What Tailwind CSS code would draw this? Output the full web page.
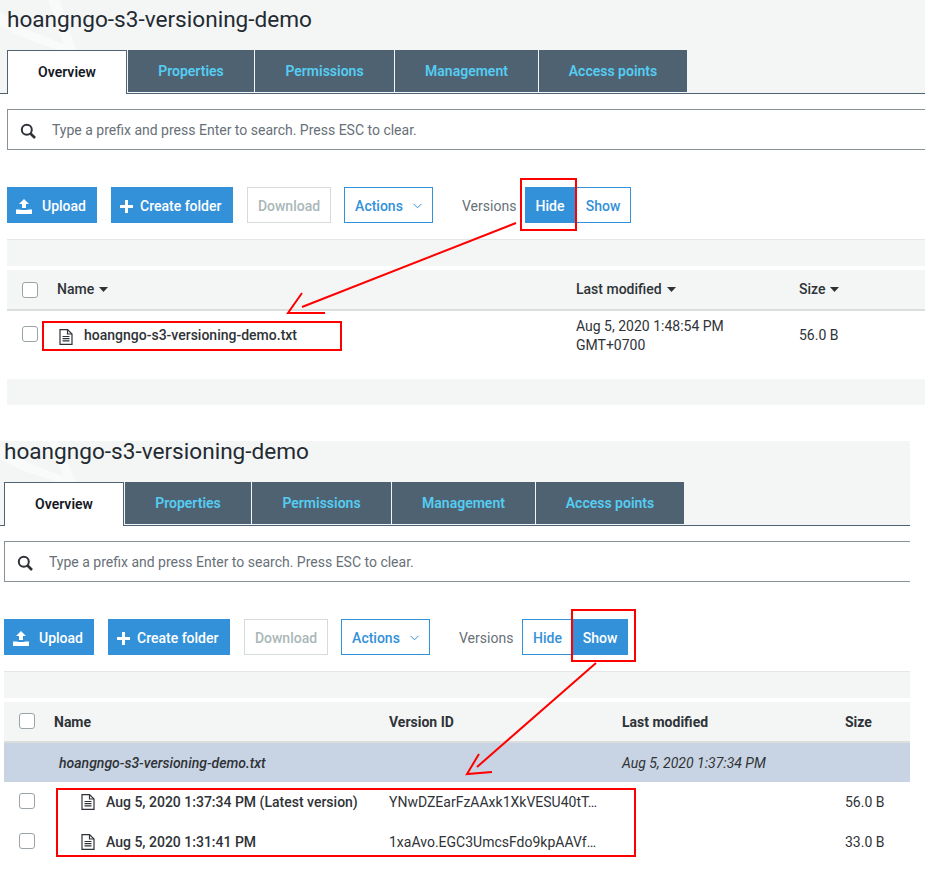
<!DOCTYPE html>
<html lang="en">

<head>
    <meta charset="UTF-8">
    <meta name="viewport" content="width=device-width, initial-scale=1.0">
    <title>S3 versioning demo</title>
    <script src="https://cdn.jsdelivr.net/npm/@tailwindcss/browser@4"></script>
</head>

<body class="bg-white">
    <div class="relative w-[925px] h-[894px] overflow-hidden font-['Roboto',sans-serif] text-[14px] text-[#16191f]">

        <!-- Versions hidden -->
        <section class="w-[925px]">
            <div class="relative bg-[#f4f6f6]">
                <svg class="absolute left-0 top-0" width="90" height="94" viewBox="0 0 90 94">
                    <path d="M0 12 L28 30 L78 50 L58 50 L24 38 L0 26 Z" fill="#f9fafa" />
                    <path d="M48 0 L60 0 L76 50 L66 50 Z" fill="#f9fafa" />
                </svg>
                <h1 class="relative h-[50px] pt-[9px] pl-[7px] text-[22.6px] leading-[22px] font-normal text-[#232a31]">hoangngo-s3-versioning-demo</h1>
                <div class="relative flex h-[44px] pl-[7px] gap-px border-b border-[#4f6272] font-semibold text-[#55cdf2]">
                    <div class="w-[120px] h-[44px] flex items-center justify-center bg-white border-x border-t border-[#4f6272] text-[#16191f]">Overview</div>
                    <div class="w-[126px] h-[42px] flex items-center justify-center bg-[#4f6272]">Properties</div>
                    <div class="w-[139px] h-[42px] flex items-center justify-center bg-[#4f6272]">Permissions</div>
                    <div class="w-[143px] h-[42px] flex items-center justify-center bg-[#4f6272]">Management</div>
                    <div class="w-[148px] h-[42px] flex items-center justify-center bg-[#4f6272]">Access points</div>
                </div>
            </div>

            <div class="pl-[7px]">
                <div class="mt-[15px] h-[41px] flex items-center border-y border-l border-[#879196] text-[#687078]">
                    <svg class="ml-[12px] mr-[16px] mt-[2px]" width="16" height="16" viewBox="0 0 16 16" fill="none" stroke="#2f3337" stroke-width="2">
                        <circle cx="6.8" cy="6.8" r="5" />
                        <path d="M10.5 10.5 L15 15" stroke-width="2.6" />
                    </svg>
                    <span class="pt-[2px]">Type a prefix and press Enter to search. Press ESC to clear.</span>
                </div>

                <div class="mt-[37px] flex items-center h-[36px] font-medium">
                    <button class="w-[90px] h-[36px] pt-[2px] pl-[9px] flex items-center gap-[10px] bg-[#3391da] text-white">
                        <svg width="16" height="15" viewBox="0 0 16 15" fill="white">
                            <path d="M8 0 L13 5 L10 5 L10 9 L6 9 L6 5 L3 5 Z" />
                            <path d="M0 10.500 H4.500 V11 H11.500 V10.500 H16 V15 H0 Z" />
                        </svg>
                        Upload
                    </button>
                    <button class="ml-[14px] w-[122px] h-[36px] pt-[2px] pl-[9px] flex items-center gap-[7px] bg-[#3391da] text-white">
                        <svg width="13" height="13" viewBox="0 0 13 13" fill="white">
                            <path d="M5 0 H8 V5 H13 V8 H8 V13 H5 V8 H0 V5 H5 Z" />
                        </svg>
                        Create folder
                    </button>
                    <button class="ml-[14px] w-[84px] h-[36px] pt-[2px] border border-[#d5dbdb] text-[#aab7b8]">Download</button>
                    <button class="ml-[13px] w-[89px] h-[36px] pt-[2px] flex items-center justify-center gap-[10px] border border-[#3391da] text-[#3391da]">
                        Actions
                        <svg width="9" height="6" viewBox="0 0 9 6" fill="none" stroke="#3391da" stroke-width="1">
                            <path d="M0.500 0.800 L4.500 4.800 L8.500 0.800" />
                        </svg>
                    </button>
                    <span class="ml-[29px] w-[63px] pt-[2px] font-normal text-[#687078]">Versions</span>
                    <button class="w-[50px] h-[36px] pt-[2px] bg-[#3391da] text-white">Hide</button>
                    <button class="w-[56px] h-[36px] pt-[2px] pl-px border border-l-0 border-[#3391da] text-[#3391da]">Show</button>
                </div>

                <div class="mt-[16px] h-[27px] bg-[#f4f6f6] border-t border-[#e4e7e7]"></div>

                <div class="mt-[4px] h-[41px] grid grid-cols-[50px_519px_223px_1fr] items-center bg-[#f4f6f6] border-b-2 border-[#dcdede] font-medium text-[#2f3337]">
                    <span class="ml-[15px] w-[16px] h-[16px] rounded-[3px] border border-[#9aa3a8] bg-white"></span>
                    <span class="flex items-center gap-[5px]">Name
                        <svg width="9" height="5" viewBox="0 0 9 5" fill="#2f3337"><path d="M0 0 H9 L4.500 5 Z" /></svg>
                    </span>
                    <span class="flex items-center gap-[5px]">Last modified
                        <svg width="9" height="5" viewBox="0 0 9 5" fill="#2f3337"><path d="M0 0 H9 L4.500 5 Z" /></svg>
                    </span>
                    <span class="flex items-center gap-[5px]">Size
                        <svg width="9" height="5" viewBox="0 0 9 5" fill="#2f3337"><path d="M0 0 H9 L4.500 5 Z" /></svg>
                    </span>
                </div>

                <div class="h-[68px] grid grid-cols-[50px_519px_223px_1fr] items-start text-[#2f3337] leading-[19px]">
                    <span class="ml-[15px] mt-[15px] w-[16px] h-[16px] rounded-[3px] border border-[#9aa3a8] bg-white"></span>
                    <span class="mt-[15px] ml-[2px] flex items-center gap-[11px] font-medium">
                        <svg class="mt-[2px]" width="14" height="16" viewBox="0 0 14 16" fill="none" stroke="#2f3337" stroke-width="1.2">
                            <path d="M1 0.600 H8.500 L13 5 V15.400 H1 Z" />
                            <path d="M8.500 0.600 V5 H13" />
                            <path d="M3.500 7.500 H10.500 M3.500 9.700 H10.500 M3.500 11.900 H10.500" />
                        </svg>
                        hoangngo-s3-versioning-demo.txt
                    </span>
                    <span class="mt-[6px]">Aug 5, 2020 1:48:54 PM<br>GMT+0700</span>
                    <span class="mt-[15px]">56.0 B</span>
                </div>

                <div class="h-[26px] bg-[#f4f6f6]"></div>
            </div>
        </section>

        <!-- Versions shown -->
        <section class="w-[910px] mt-[36px]">
            <div class="relative bg-[#f4f6f6]">
                <svg class="absolute left-0 top-0" width="90" height="85" viewBox="0 0 90 85">
                    <path d="M0 4 L28 22 L78 41 L58 41 L24 30 L0 18 Z" fill="#f9fafa" />
                    <path d="M48 0 L58 0 L76 41 L66 41 Z" fill="#f9fafa" />
                </svg>
                <h1 class="relative h-[41px] pl-[4px] text-[22.6px] leading-[22px] font-normal text-[#232a31]">hoangngo-s3-versioning-demo</h1>
                <div class="relative flex h-[44px] pl-[4px] gap-px border-b border-[#4f6272] font-semibold text-[#55cdf2]">
                    <div class="w-[120px] h-[44px] flex items-center justify-center bg-white border-x border-t border-[#4f6272] text-[#16191f]">Overview</div>
                    <div class="w-[126px] h-[42px] flex items-center justify-center bg-[#4f6272]">Properties</div>
                    <div class="w-[139px] h-[42px] flex items-center justify-center bg-[#4f6272]">Permissions</div>
                    <div class="w-[143px] h-[42px] flex items-center justify-center bg-[#4f6272]">Management</div>
                    <div class="w-[148px] h-[42px] flex items-center justify-center bg-[#4f6272]">Access points</div>
                </div>
            </div>

            <div class="pl-[4px]">
                <div class="mt-[15px] h-[41px] flex items-center border-y border-l border-[#879196] text-[#687078]">
                    <svg class="ml-[12px] mr-[16px] mt-[2px]" width="16" height="16" viewBox="0 0 16 16" fill="none" stroke="#2f3337" stroke-width="2">
                        <circle cx="6.8" cy="6.8" r="5" />
                        <path d="M10.5 10.5 L15 15" stroke-width="2.6" />
                    </svg>
                    <span class="pt-[2px]">Type a prefix and press Enter to search. Press ESC to clear.</span>
                </div>

                <div class="mt-[37px] flex items-center h-[36px] font-medium">
                    <button class="w-[90px] h-[36px] pt-[2px] pl-[9px] flex items-center gap-[10px] bg-[#3391da] text-white">
                        <svg width="16" height="15" viewBox="0 0 16 15" fill="white">
                            <path d="M8 0 L13 5 L10 5 L10 9 L6 9 L6 5 L3 5 Z" />
                            <path d="M0 10.500 H4.500 V11 H11.500 V10.500 H16 V15 H0 Z" />
                        </svg>
                        Upload
                    </button>
                    <button class="ml-[14px] w-[122px] h-[36px] pt-[2px] pl-[9px] flex items-center gap-[7px] bg-[#3391da] text-white">
                        <svg width="13" height="13" viewBox="0 0 13 13" fill="white">
                            <path d="M5 0 H8 V5 H13 V8 H8 V13 H5 V8 H0 V5 H5 Z" />
                        </svg>
                        Create folder
                    </button>
                    <button class="ml-[14px] w-[84px] h-[36px] pt-[2px] border border-[#d5dbdb] text-[#aab7b8]">Download</button>
                    <button class="ml-[13px] w-[89px] h-[36px] pt-[2px] flex items-center justify-center gap-[10px] border border-[#3391da] text-[#3391da]">
                        Actions
                        <svg width="9" height="6" viewBox="0 0 9 6" fill="none" stroke="#3391da" stroke-width="1">
                            <path d="M0.500 0.800 L4.500 4.800 L8.500 0.800" />
                        </svg>
                    </button>
                    <span class="ml-[29px] w-[63px] pt-[2px] font-normal text-[#687078]">Versions</span>
                    <button class="w-[50px] h-[36px] pt-[2px] border border-r-0 border-[#3391da] text-[#3391da]">Hide</button>
                    <button class="w-[56px] h-[36px] pt-[2px] bg-[#3391da] text-white">Show</button>
                </div>

                <div class="mt-[16px] h-[27px] bg-[#f4f6f6] border-t border-[#e4e7e7]"></div>

                <div class="mt-[4px] h-[41px] grid grid-cols-[50px_335px_233px_223px_1fr] items-center bg-[#f4f6f6] border-b-2 border-[#dcdede] font-bold text-[#2f3337]">
                    <span class="ml-[15px] mb-[2px] w-[16px] h-[16px] rounded-[3px] border border-[#9aa3a8] bg-white"></span>
                    <span class="pt-[2px]">Name</span>
                    <span class="pt-[2px]">Version ID</span>
                    <span class="pt-[2px]">Last modified</span>
                    <span class="pt-[2px]">Size</span>
                </div>

                <div class="h-[39px] pt-[2px] grid grid-cols-[50px_335px_233px_223px_1fr] items-center bg-[#c8d3e3] italic font-medium text-[#2f3337]">
                    <span></span>
                    <span class="ml-[5px]">hoangngo-s3-versioning-demo.txt</span>
                    <span></span>
                    <span class="font-normal">Aug 5, 2020 1:37:34 PM</span>
                </div>

                <div class="h-[40px] grid grid-cols-[50px_335px_233px_223px_1fr] items-center text-[#2f3337]">
                    <span class="ml-[15px] mb-[2px] w-[16px] h-[16px] rounded-[3px] border border-[#9aa3a8] bg-white"></span>
                    <span class="ml-[27px] flex items-center gap-[11px] font-medium">
                        <svg width="14" height="16" viewBox="0 0 14 16" fill="none" stroke="#2f3337" stroke-width="1.2">
                            <path d="M1 0.600 H8.500 L13 5 V15.400 H1 Z" />
                            <path d="M8.500 0.600 V5 H13" />
                            <path d="M3.500 7.500 H10.500 M3.500 9.700 H10.500 M3.500 11.900 H10.500" />
                        </svg>
                        Aug 5, 2020 1:37:34 PM (Latest version)
                    </span>
                    <span>YNwDZEarFzAAxk1XkVESU40tT…</span>
                    <span></span>
                    <span>56.0 B</span>
                </div>

                <div class="h-[40px] grid grid-cols-[50px_335px_233px_223px_1fr] items-center text-[#2f3337]">
                    <span class="ml-[15px] mb-[2px] w-[16px] h-[16px] rounded-[3px] border border-[#9aa3a8] bg-white"></span>
                    <span class="ml-[27px] flex items-center gap-[11px] font-medium">
                        <svg width="14" height="16" viewBox="0 0 14 16" fill="none" stroke="#2f3337" stroke-width="1.2">
                            <path d="M1 0.600 H8.500 L13 5 V15.400 H1 Z" />
                            <path d="M8.500 0.600 V5 H13" />
                            <path d="M3.500 7.500 H10.500 M3.500 9.700 H10.500 M3.500 11.900 H10.500" />
                        </svg>
                        Aug 5, 2020 1:31:41 PM
                    </span>
                    <span>1xaAvo.EGC3UmcsFdo9kpAAVf…</span>
                    <span></span>
                    <span>33.0 B</span>
                </div>
            </div>
        </section>

        <!-- Red annotations drawn over the screenshots -->
        <svg class="absolute left-0 top-0 pointer-events-none" width="925" height="894" viewBox="0 0 925 894" fill="none" stroke="#ff0000" stroke-width="2">
            <rect x="521" y="179" width="55" height="51" />
            <rect x="43" y="322" width="298" height="28" />
            <path d="M516 223 L302 307" />
            <path d="M302 293 L288 313 L325 313" />
            <rect x="572" y="610" width="63" height="51" />
            <rect x="57" y="789" width="578" height="67" />
            <path d="M596 663 L477 767" />
            <path d="M479 754 L467 774 L492 772" />
        </svg>
    </div>
</body>

</html>
